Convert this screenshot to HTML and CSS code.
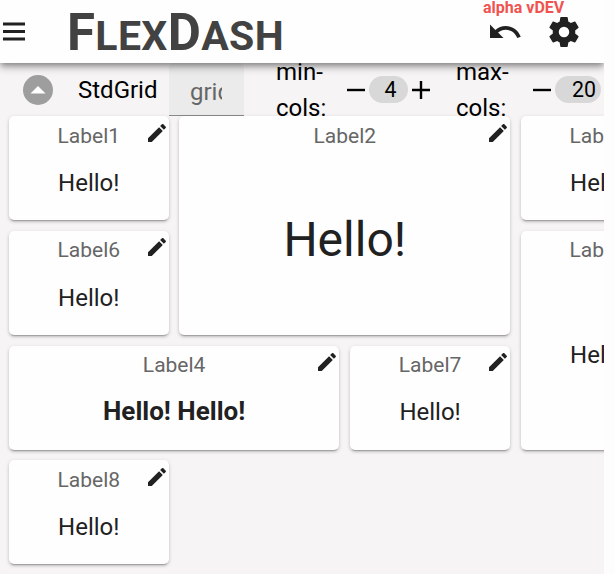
FILE: index.html
```html
<!DOCTYPE html>
<html lang="en">
<head>
<meta charset="utf-8">
<title>FlexDash</title>
<link rel="stylesheet" href="styles.css">
</head>
<body>
<svg class="defs" aria-hidden="true">
  <symbol id="pencil" viewBox="0 0 24 24"><path d="M20.71,7.04C21.1,6.65 21.1,6 20.71,5.63L18.37,3.29C18,2.9 17.35,2.9 16.96,3.29L15.12,5.12L18.87,8.87M3,17.25V21H6.75L17.81,9.93L14.06,6.18L3,17.25Z"/></symbol>
</svg>
<div class="app">
  <header class="bar">
    <svg class="menu" viewBox="0 0 22 19"><path d="M0,0.5H22V3.5H0ZM0,8H22V11H0ZM0,15.5H22V18.5H0Z"/></svg>
    <h1 class="brand"><span class="cap">F</span>LEX<span class="cap">D</span>ASH</h1>
    <span class="version">alpha vDEV</span>
    <svg class="action" viewBox="0 0 24 24"><path d="M12.5,8C9.85,8 7.45,9 5.6,10.6L2,7V16H11L7.38,12.38C8.77,11.22 10.54,10.5 12.5,10.5C16.04,10.5 19.08,12.81 20.13,16L22.5,15.22C21.11,11.03 17.15,8 12.5,8Z"/></svg>
    <svg class="action" viewBox="0 0 24 24"><path d="M12,15.5A3.5,3.5 0 0,1 8.5,12A3.5,3.5 0 0,1 12,8.5A3.5,3.5 0 0,1 15.5,12A3.5,3.5 0 0,1 12,15.5M19.43,12.97C19.47,12.65 19.5,12.33 19.5,12C19.5,11.67 19.47,11.34 19.43,11L21.54,9.37C21.73,9.22 21.78,8.95 21.66,8.73L19.66,5.27C19.54,5.05 19.27,4.96 19.05,5.05L16.56,6.05C16.04,5.66 15.5,5.32 14.87,5.07L14.5,2.42C14.46,2.18 14.25,2 14,2H10C9.75,2 9.54,2.18 9.5,2.42L9.13,5.07C8.5,5.32 7.96,5.66 7.44,6.05L4.95,5.05C4.73,4.96 4.46,5.05 4.34,5.27L2.34,8.73C2.21,8.95 2.27,9.22 2.46,9.37L4.57,11C4.53,11.34 4.5,11.67 4.5,12C4.5,12.33 4.53,12.65 4.57,12.97L2.46,14.63C2.27,14.78 2.21,15.05 2.34,15.27L4.34,18.73C4.46,18.95 4.73,19.03 4.95,18.95L7.44,17.94C7.96,18.34 8.5,18.68 9.13,18.93L9.5,21.58C9.54,21.82 9.75,22 10,22H14C14.25,22 14.46,21.82 14.5,21.58L14.87,18.93C15.5,18.67 16.04,18.34 16.56,17.94L19.05,18.95C19.27,19.03 19.54,18.95 19.66,18.73L21.66,15.27C21.78,15.05 21.73,14.78 21.54,14.63L19.43,12.97Z"/></svg>
  </header>
  <div class="tools">
    <svg class="collapse" viewBox="0 0 30 30"><circle cx="15" cy="15" r="15"/><path class="tri" d="M7.5,18.5L15,11L22.5,18.5Z"/></svg>
    <span class="kind">StdGrid</span>
    <div class="field"><span class="field-text">grid</span></div>
    <span class="name name-min">min-<br>cols:</span>
    <svg class="sign" viewBox="0 0 18 18"><path d="M0,7.8H18V10.2H0Z"/></svg>
    <span class="pill">4</span>
    <svg class="sign plus" viewBox="0 0 18 18"><path d="M0,7.8H7.8V0H10.2V7.8H18V10.2H10.2V18H7.8V10.2H0Z"/></svg>
    <span class="name name-max">max-<br>cols:</span>
    <svg class="sign" viewBox="0 0 18 18"><path d="M0,7.8H18V10.2H0Z"/></svg>
    <span class="pill pill-wide">20</span>
  </div>
  <main class="grid">
    <section class="card"><h2>Label1</h2><svg class="edit"><use href="#pencil"/></svg><p>Hello!</p></section>
    <section class="card big"><h2>Label2</h2><svg class="edit"><use href="#pencil"/></svg><p>Hello!</p></section>
    <section class="card"><h2>Label3</h2><svg class="edit"><use href="#pencil"/></svg><p>Hello!</p></section>
    <section class="card"><h2>Label6</h2><svg class="edit"><use href="#pencil"/></svg><p>Hello!</p></section>
    <section class="card tall"><h2>Label5</h2><svg class="edit"><use href="#pencil"/></svg><p>Hello!</p></section>
    <section class="card wide"><h2>Label4</h2><svg class="edit"><use href="#pencil"/></svg><p>Hello! Hello!</p></section>
    <section class="card"><h2>Label7</h2><svg class="edit"><use href="#pencil"/></svg><p>Hello!</p></section>
    <section class="card"><h2>Label8</h2><svg class="edit"><use href="#pencil"/></svg><p>Hello!</p></section>
  </main>
</div>
</body>
</html>
```
FILE: styles.css
```css
* { box-sizing: border-box; }
html, body { height: 100%; margin: 0; overflow: hidden; }
body {
  background: #fdfdfd;
  color: #212121;
  font-family: Roboto, "Liberation Sans", sans-serif;
  font-size: 24px;
}
svg { display: block; flex: none; fill: #212121; }
.defs { position: absolute; width: 0; height: 0; }
.app {
  width: 604px;
  height: 574px;
  overflow: hidden;
  background: #f6f4f5;
}

.bar {
  position: relative;
  z-index: 1;
  display: flex;
  align-items: center;
  height: 63px;
  padding: 0 22px 0 3px;
  background: #fffefe;
  box-shadow: 0 3px 5px -1px rgba(0,0,0,.28), 0 5px 7px rgba(0,0,0,.17), 0 1px 13px rgba(0,0,0,.14);
}
.menu { width: 22px; height: 19px; }
.brand {
  flex: 1;
  margin: 0 0 0 42px;
  padding-top: 6px;
  color: #424242;
  font-size: 41px;
  font-weight: 700;
  line-height: 59px;
  letter-spacing: .35px;
  white-space: nowrap;
}
.cap { font-size: 51px; }
.version {
  position: absolute;
  left: 483px;
  top: -2px;
  color: #ef5350;
  font-size: 16px;
  font-weight: 700;
  line-height: 19px;
}
.action { width: 36px; height: 36px; }
.action + .action { margin-left: 23px; }

.tools {
  display: flex;
  align-items: center;
  height: 53.2px;
  padding-left: 23px;
  overflow: hidden;
  color: #000;
  white-space: nowrap;
}
.tools > * { flex: none; }
.collapse { width: 30px; height: 30px; fill: #9e9e9e; }
.tri { fill: #fff; }
.kind { box-sizing: content-box; width: 91px; padding-left: 25px; }
.field {
  display: flex;
  align-items: center;
  width: 75px;
  height: 53px;
  padding: 5px 0 0 21px;
  border-bottom: 1px solid #8a8a8a;
  border-radius: 5px 5px 0 0;
  background: #ebebeb;
  color: #666;
}
.field-text { width: 32px; overflow: hidden; }
.name { line-height: 36px; }
.name-min { width: 70.5px; margin-left: 32px; }
.name-max { width: 77px; margin-left: 26.5px; }
.sign { width: 18px; height: 18px; fill: #000; }
.plus { margin-left: 4px; }
.pill {
  width: 39px;
  height: 27px;
  margin-left: 4px;
  padding-right: 11px;
  border-radius: 14px;
  background: #d8d8d8;
  font-size: 21.33px;
  line-height: 27px;
  text-align: right;
}
.pill-wide { width: 46px; padding-right: 5px; }

.grid {
  display: grid;
  grid-template-columns: repeat(4, 160px);
  grid-auto-rows: 104px;
  gap: 10.67px;
  padding-left: 8.8px;
}
.card {
  position: relative;
  display: flex;
  flex-direction: column;
  border-radius: 5px;
  background: #fffefe;
  box-shadow: 0 3px 1px -2px rgba(0,0,0,.2), 0 2px 3px rgba(0,0,0,.14), 0 1px 4px rgba(0,0,0,.12);
}
.big { grid-column: span 2; grid-row: span 2; }
.tall { grid-column: 4; grid-row: span 2; }
.wide { grid-column: span 2; }
.card h2 {
  margin: 5.5px 0 0;
  color: #666;
  font-size: 21px;
  font-weight: 400;
  line-height: 28px;
  text-align: center;
}
.card p {
  display: flex;
  flex: 1;
  align-items: center;
  justify-content: center;
  margin: 0;
  padding-bottom: 4.2px;
}
.big p { padding-bottom: 5px; font-size: 48px; }
.wide p { padding-bottom: 6.5px; font-size: 26px; font-weight: 700; }
.edit { position: absolute; top: 4.4px; right: 0; width: 24px; height: 24px; }
```
